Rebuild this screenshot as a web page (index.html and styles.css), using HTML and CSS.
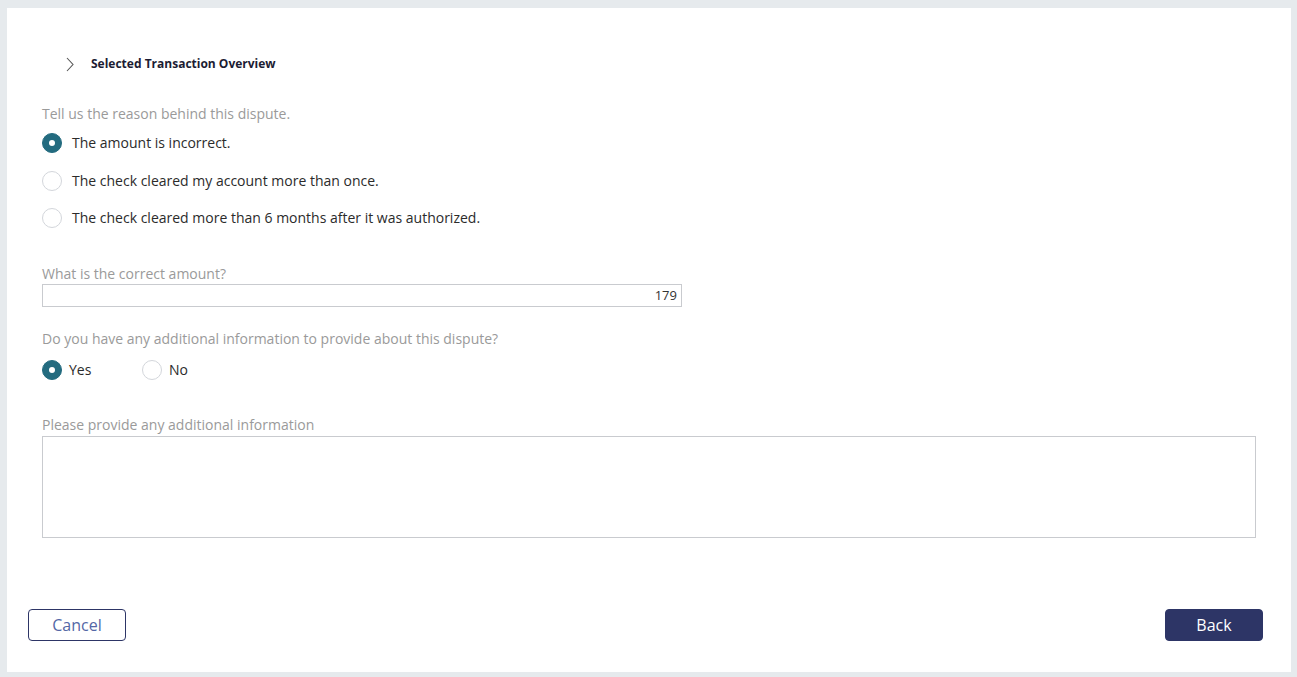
FILE: index.html
```html
<!DOCTYPE html>
<html>
<head>
<meta charset="utf-8">
<link rel="stylesheet" href="styles.css">
</head>
<body>
<div class="panel">
  <div class="content">
    <div class="section-header">
      <svg class="chevron" width="8" height="15" viewBox="0 0 8 15"><path d="M1 1 L7 7.5 L1 14" fill="none" stroke="#555" stroke-width="1.1"/></svg>
      <span class="section-title">Selected Transaction Overview</span>
    </div>

    <div class="field-label reason-label">Tell us the reason behind this dispute.</div>
    <div class="radio-list">
      <label class="radio-row"><span class="radio checked"></span><span class="radio-text">The amount is incorrect.</span></label>
      <label class="radio-row"><span class="radio"></span><span class="radio-text">The check cleared my account more than once.</span></label>
      <label class="radio-row"><span class="radio"></span><span class="radio-text">The check cleared more than 6 months after it was authorized.</span></label>
    </div>

    <div class="field-label amount-label">What is the correct amount?</div>
    <div class="amount-input">179</div>

    <div class="field-label info-label">Do you have any additional information to provide about this dispute?</div>
    <div class="inline-radios">
      <label class="inline-option"><span class="radio checked"></span><span class="inline-text">Yes</span></label>
      <label class="inline-option"><span class="radio"></span><span class="inline-text">No</span></label>
    </div>

    <div class="field-label extra-label">Please provide any additional information</div>
    <div class="textarea"></div>
  </div>

  <div class="footer">
    <button class="btn btn-secondary">Cancel</button>
    <button class="btn btn-primary">Back</button>
  </div>
</div>
</body>
</html>
```

FILE: styles.css
```css
html, body {
  margin: 0;
  padding: 0;
}
body {
  background: #e6eaed;
  padding: 8px 6px 5px 7px;
  font-family: "Open Sans", "Noto Sans", sans-serif;
  box-sizing: border-box;
  height: 677px;
}
.panel {
  background: #ffffff;
  height: 664px;
  display: flex;
  flex-direction: column;
  justify-content: space-between;
  box-sizing: border-box;
}
.content {
  padding: 0 35px;
  display: flex;
  flex-direction: column;
}
.section-header {
  display: flex;
  align-items: center;
  height: 20px;
  margin-top: 46px;
  padding-left: 24px;
}
.chevron {
  display: block;
  margin-top: 1px;
}
.section-title {
  margin-left: 17px;
  font-size: 12px;
  font-weight: 700;
  color: #1c1c33;
  line-height: 20px;
}
.field-label {
  font-size: 14px;
  line-height: 20px;
  color: #9a9a9a;
}
.reason-label {
  margin-top: 30px;
}
.radio-list {
  display: flex;
  flex-direction: column;
  margin-top: 9px;
}
.radio-row {
  display: flex;
  align-items: center;
  height: 20px;
  margin-bottom: 17.5px;
}
.radio-row:last-child {
  margin-bottom: 0;
}
.radio {
  width: 20px;
  height: 20px;
  box-sizing: border-box;
  border-radius: 50%;
  border: 1px solid #d3d6db;
  background: #fff;
  flex: none;
  position: relative;
}
.radio.checked {
  background: #236b7f;
  border-color: #236b7f;
}
.radio.checked::after {
  content: "";
  position: absolute;
  width: 6px;
  height: 6px;
  border-radius: 50%;
  background: #fff;
  left: 6px;
  top: 6px;
}
.radio-text {
  margin-left: 10px;
  font-size: 14px;
  color: #2b2b2b;
  line-height: 20px;
}
.amount-label {
  margin-top: 36px;
}
.amount-input {
  margin-top: 0;
  width: 640px;
  height: 23px;
  box-sizing: border-box;
  border: 1px solid #c9cbcf;
  text-align: right;
  font-size: 13px;
  line-height: 21px;
  color: #333;
  padding-right: 4px;
}
.info-label {
  margin-top: 22px;
}
.inline-radios {
  display: flex;
  margin-top: 11px;
}
.inline-option {
  display: flex;
  align-items: center;
  min-width: 100px;
  height: 20px;
}
.inline-text {
  margin-left: 7px;
  font-size: 14px;
  color: #2b2b2b;
  line-height: 20px;
}
.extra-label {
  margin-top: 35px;
}
.textarea {
  margin-top: 1px;
  height: 102px;
  box-sizing: border-box;
  border: 1px solid #c9cbcf;
}
.footer {
  display: flex;
  justify-content: space-between;
  padding: 0 28px 31px 21px;
}
.btn {
  width: 98px;
  height: 32px;
  border-radius: 4px;
  font-family: "Open Sans", "Noto Sans", sans-serif;
  font-size: 16px;
  box-sizing: border-box;
  cursor: pointer;
  padding: 0;
}
.btn-secondary {
  background: #fff;
  border: 1px solid #2d3566;
  color: #5467a6;
}
.btn-primary {
  background: #2d3566;
  border: 1px solid #2d3566;
  color: #fff;
}
```
